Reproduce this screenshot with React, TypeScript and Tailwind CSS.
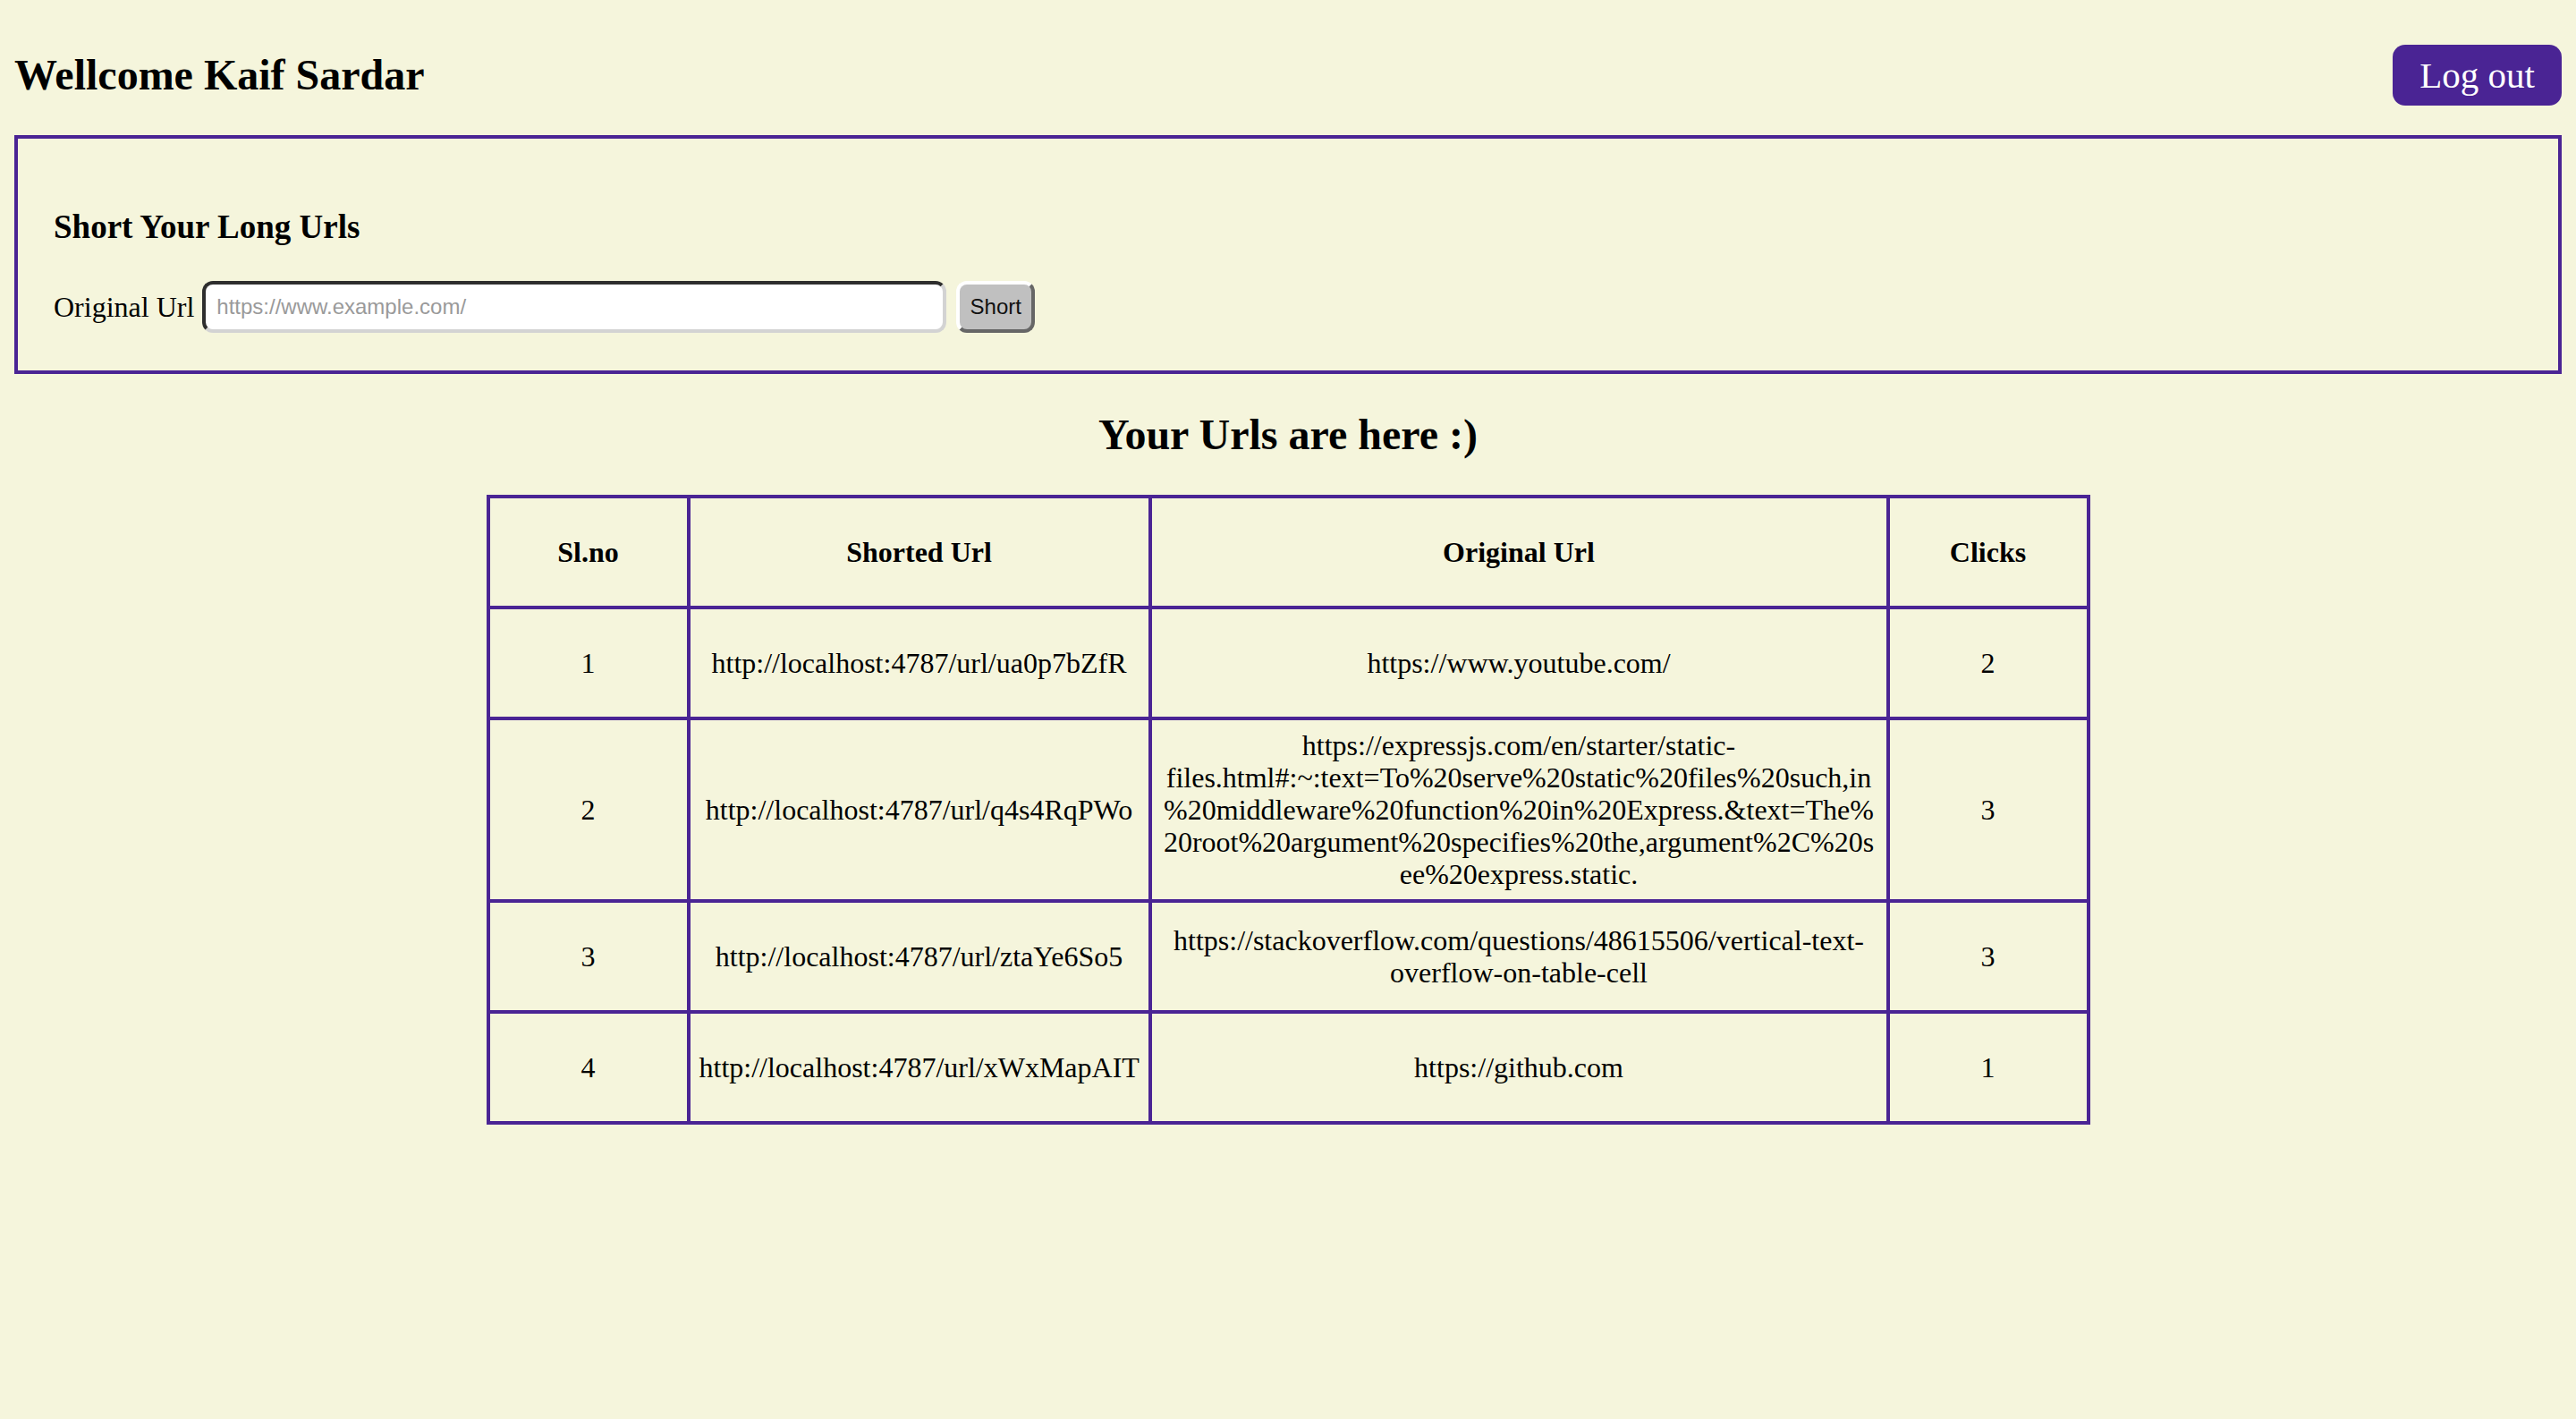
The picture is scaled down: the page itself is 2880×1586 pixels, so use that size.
import React from 'react';

const urls = [
  {
    id: 1,
    short: 'http://localhost:4787/url/ua0p7bZfR',
    original: ['https://www.youtube.com/'],
    clicks: 2,
  },
  {
    id: 2,
    short: 'http://localhost:4787/url/q4s4RqPWo',
    original: [
      'https://expressjs.com/en/starter/static-',
      'files.html#:~:text=To%20serve%20static%20files%20such,in',
      '%20middleware%20function%20in%20Express.&text=The%',
      '20root%20argument%20specifies%20the,argument%2C%20s',
      'ee%20express.static.',
    ],
    clicks: 3,
  },
  {
    id: 3,
    short: 'http://localhost:4787/url/ztaYe6So5',
    original: ['https://stackoverflow.com/questions/48615506/vertical-text-', 'overflow-on-table-cell'],
    clicks: 3,
  },
  {
    id: 4,
    short: 'http://localhost:4787/url/xWxMapAIT',
    original: ['https://github.com'],
    clicks: 1,
  },
];

const cell = 'border-4 border-[#4a2494] px-[10px] py-[10px] h-[124px] text-center align-middle';

export default function App() {
  return (
    <div className="min-h-screen bg-[#f5f5dc] p-4 font-['Liberation_Serif',serif] text-black">
      <div className="flex items-center justify-between">
        <h2 className="my-10 text-[48px] font-bold leading-[55px]">Wellcome Kaif Sardar</h2>
        <button className="h-[68px] rounded-[14px] bg-[#4a2494] px-[30px] text-[41px] leading-[46px] text-white">
          Log out
        </button>
      </div>

      <div className="border-4 border-[#4a2494] px-10 pt-10 pb-[42px]">
        <h3 className="mt-[37px] mb-[39px] text-[37px] font-bold leading-[43px]">Short Your Long Urls</h3>
        <div className="flex items-center">
          <label className="mr-[9px] text-[32px] leading-[37px]">Original Url</label>
          <input
            placeholder="https://www.example.com/"
            className="h-[58px] w-[832px] rounded-[12px] border-4 border-t-[#2e2e2e] border-l-[#2e2e2e] border-b-[#d3d3d3] border-r-[#d3d3d3] bg-white px-[12px] font-['Liberation_Sans',sans-serif] text-[24px] placeholder:text-[#9a9a9a] outline-none"
          />
          <button className="ml-[11px] h-[58px] w-[88px] rounded-[12px] border-4 border-t-white border-l-white border-b-[#666] border-r-[#666] bg-[#c0c0c0] font-['Liberation_Sans',sans-serif] text-[24px] text-[#111]">
            Short
          </button>
        </div>
      </div>

      <h2 className="my-10 text-center text-[48px] font-bold leading-[55px]">Your Urls are here :)</h2>

      <table className="mx-auto w-[1789px] table-fixed border-collapse text-[32px] leading-[36px]">
        <colgroup>
          <col className="w-[224px]" />
          <col className="w-[516px]" />
          <col className="w-[825px]" />
          <col className="w-[224px]" />
        </colgroup>
        <thead>
          <tr>
            <th className={cell}>Sl.no</th>
            <th className={cell}>Shorted Url</th>
            <th className={cell}>Original Url</th>
            <th className={cell}>Clicks</th>
          </tr>
        </thead>
        <tbody>
          {urls.map((u) => (
            <tr key={u.id}>
              <td className={cell}>{u.id}</td>
              <td className={`${cell} whitespace-nowrap`}>{u.short}</td>
              <td className={cell}>
                {u.original.map((line, i) => (
                  <div key={i}>{line}</div>
                ))}
              </td>
              <td className={cell}>{u.clicks}</td>
            </tr>
          ))}
        </tbody>
      </table>
    </div>
  );
}
